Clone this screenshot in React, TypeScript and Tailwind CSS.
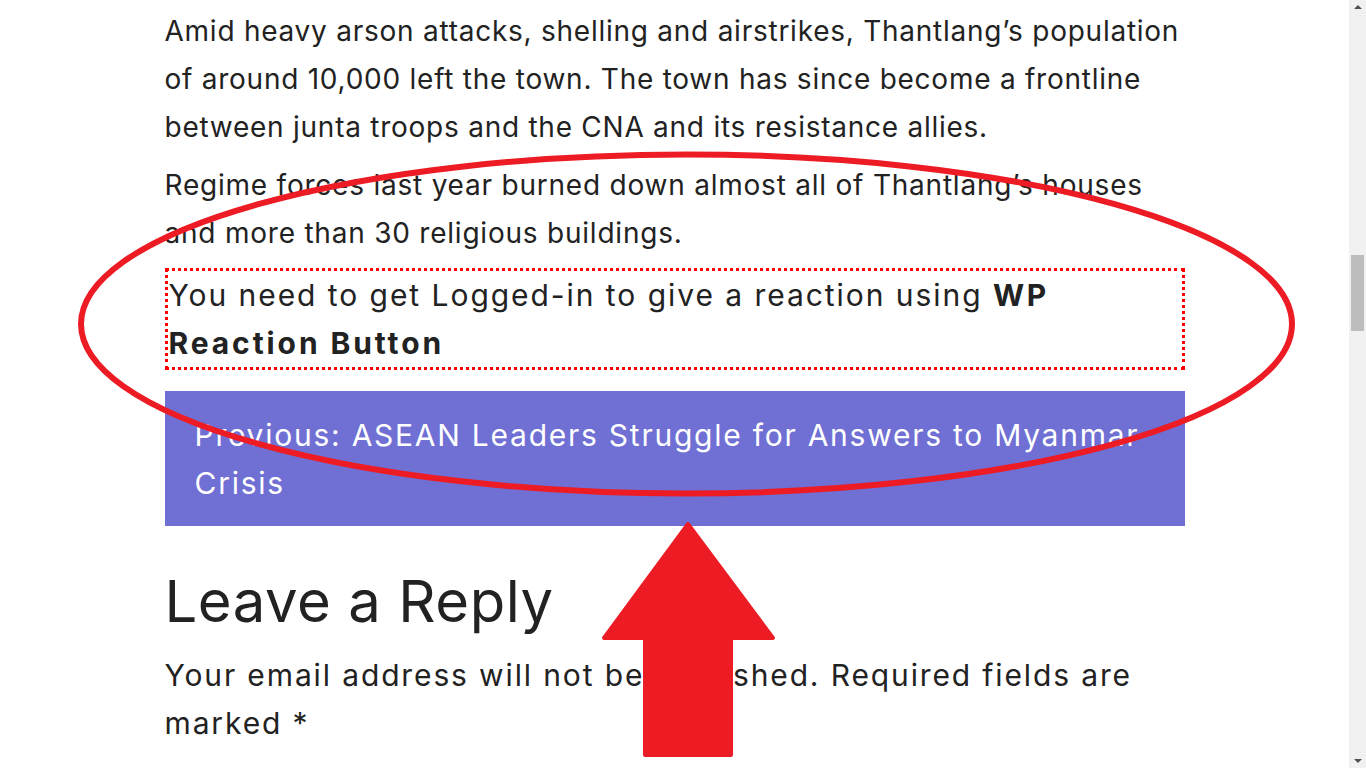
import React from 'react'

const font = { fontFamily: 'Inter, "Noto Sans", sans-serif' }

const para1 = [
  'Amid heavy arson attacks, shelling and airstrikes, Thantlang’s population',
  'of around 10,000 left the town. The town has since become a frontline',
  'between junta troops and the CNA and its resistance allies.',
]

const para2 = [
  'Regime forces last year burned down almost all of Thantlang’s houses',
  'and more than 30 religious buildings.',
]

function Lines({ lines }: { lines: string[] }) {
  return (
    <>
      {lines.map((l, i) => (
        <span key={i} className="block whitespace-nowrap">
          {l}
        </span>
      ))}
    </>
  )
}

function Annotations() {
  return (
    <svg
      className="pointer-events-none absolute left-0 top-0"
      width="1349"
      height="768"
      viewBox="0 0 1349 768"
    >
      <ellipse cx="686.5" cy="324" rx="605.5" ry="169.5" fill="none" stroke="#ed1c24" strokeWidth="6" />
      <path
        d="M688 524 L773 638 L731 638 L731 755 L645 755 L645 638 L604 638 Z"
        fill="#ed1c24"
        stroke="#ed1c24"
        strokeWidth="4"
        strokeLinejoin="round"
      />
    </svg>
  )
}

function Scrollbar() {
  return (
    <div className="relative h-screen w-[17px] shrink-0 bg-[#f1f1f1]">
      <div className="absolute left-1/2 top-[5px] h-0 w-0 -translate-x-1/2 border-x-[4px] border-b-[4px] border-x-transparent border-b-[#505050]" />
      <div className="absolute left-[2px] top-[255px] h-[76px] w-[13px] bg-[#bcbcbc]" />
      <div className="absolute bottom-[5px] left-1/2 h-0 w-0 -translate-x-1/2 border-x-[4px] border-t-[4px] border-x-transparent border-t-[#505050]" />
    </div>
  )
}

export default function App() {
  return (
    <div className="flex h-screen w-full overflow-hidden bg-white" style={font}>
      <div className="relative flex-1">
        <div className="mx-auto w-[1020px] pt-[7px] text-[#222]">
          <p className="text-[28px] leading-[48px] tracking-[0.75px]">
            <Lines lines={para1} />
          </p>
          <p className="mt-[10px] text-[28px] leading-[48px] tracking-[0.78px]">
            <Lines lines={para2} />
          </p>

          <div className="mt-[11px] border-[3px] border-dotted border-[#ff0000] pl-[1px] text-[30px] leading-[48px] tracking-[1.95px]">
            <span className="block whitespace-nowrap">
              You need to get Logged-in to give a reaction using{' '}
              <b className="font-bold tracking-[2.8px]">WP</b>
            </span>
            <span className="block whitespace-nowrap font-bold tracking-[2.9px]">Reaction Button</span>
          </div>

          <div className="mt-[21px] bg-[#6f6fd4] pb-[19px] pl-[30px] pt-[20px] text-[30px] leading-[48px] tracking-[1.75px] text-white">
            <span className="block whitespace-nowrap">Previous: ASEAN Leaders Struggle for Answers to Myanmar</span>
            <span className="block">Crisis</span>
          </div>

          <h2 className="mt-[39px] text-[58px] leading-[72px] font-normal tracking-[0.55px]">Leave a Reply</h2>

          <p className="mt-[14px] text-[30px] leading-[48px] tracking-[1.87px]">
            <Lines lines={['Your email address will not be published. Required fields are', 'marked *']} />
          </p>
        </div>
        <Annotations />
      </div>
      <Scrollbar />
    </div>
  )
}
